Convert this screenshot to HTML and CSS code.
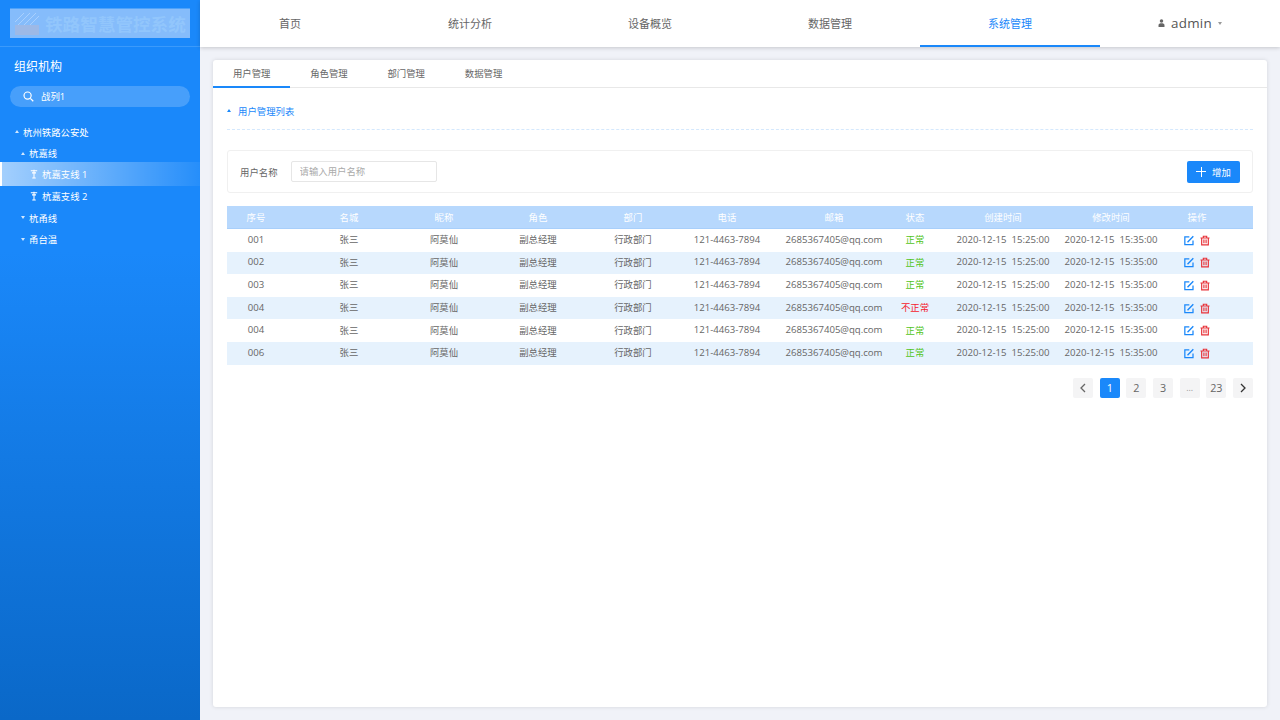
FILE: index.html
```html
<!doctype html>
<html lang="zh-CN">

<head>
  <meta charset="UTF-8" />
  <title>铁路智慧管控系统</title>
  <link rel="stylesheet" href="styles.css">
</head>

<body>
  <svg class="icon-defs" width="0" height="0">
    <symbol id="icon-edit" viewBox="0 0 12 12">
      <path d="M10.8 6V11H1V1.6H6.4" fill="none" stroke="currentColor" stroke-width="1.5" />
      <path d="M4.2 8L11.2 1" fill="none" stroke="currentColor" stroke-width="1.7" />
    </symbol>
    <symbol id="icon-trash" viewBox="0 0 12 12">
      <path d="M.6 3H11.4M4 2.8V.9H8V2.8M2 3.2V11.2H10V3.2M4.7 4.8V9.2M7.3 4.8V9.2" fill="none" stroke="currentColor" stroke-width="1.4" />
    </symbol>
    <symbol id="icon-pole" viewBox="0 0 10 12">
      <path d="M1 2H9M2.5 4.6H7.5M5 .6V10.4M2.8 11H7.2" fill="none" stroke="currentColor" stroke-width="1.3" />
    </symbol>
  </svg>

  <div class="app">
    <aside class="sidebar">
      <div class="brand">
        <div class="logo">
          <svg class="logo-mark" viewBox="0 0 24 22">
            <path d="M0 9L9 0M2 13L15 0M7 14L21 0M13 14L24 3" stroke="#a9d0fd" stroke-width="1" fill="none" />
            <rect x="0" y="12" width="24" height="10" fill="#9db9e6" />
          </svg>
          <span class="logo-text">铁路智慧管控系统</span>
        </div>
      </div>
      <div class="side-title">组织机构</div>
      <div class="side-search">
        <svg class="search-icon" viewBox="0 0 12 12">
          <circle cx="5" cy="5" r="3.9" fill="none" stroke="#fff" stroke-width="1.3" />
          <path d="M8 8L11.2 11.2" stroke="#fff" stroke-width="1.4" />
        </svg>
        <span>战列1</span>
      </div>
      <ul class="tree">
        <li class="tree-item level-1"><i class="caret up"></i>杭州铁路公安处</li>
        <li class="tree-item level-2"><i class="caret up"></i>杭嘉线</li>
        <li class="tree-item level-3 active"><svg class="pole"><use href="#icon-pole" /></svg>杭嘉支线 1</li>
        <li class="tree-item level-3"><svg class="pole"><use href="#icon-pole" /></svg>杭嘉支线 2</li>
        <li class="tree-item level-2"><i class="caret down"></i>杭甬线</li>
        <li class="tree-item level-2"><i class="caret down"></i>甬台温</li>
      </ul>
    </aside>

    <div class="main">
      <header class="topbar">
        <a class="nav-item">首页</a>
        <a class="nav-item">统计分析</a>
        <a class="nav-item">设备概览</a>
        <a class="nav-item">数据管理</a>
        <a class="nav-item active">系统管理</a>
        <div class="nav-item user">
          <svg class="user-icon" viewBox="0 0 8 9">
            <circle cx="4" cy="2.3" r="2" fill="#666" />
            <path d="M.6 9V6.8C.6 5.4 2 4.8 4 4.8S7.4 5.4 7.4 6.8V9Z" fill="#666" />
          </svg>
          <span>admin</span>
          <i class="caret down grey"></i>
        </div>
      </header>

      <div class="content">
        <div class="card">
          <div class="tabs">
            <div class="tab active">用户管理</div>
            <div class="tab">角色管理</div>
            <div class="tab">部门管理</div>
            <div class="tab">数据管理</div>
          </div>

          <div class="panel">
            <div class="section-title"><i class="caret up blue"></i>用户管理列表</div>

            <div class="filter">
              <label class="filter-label">用户名称</label>
              <input class="filter-input" type="text" placeholder="请输入用户名称">
              <button class="add-btn"><span class="plus"></span>增加</button>
            </div>

            <div class="table">
              <div class="row head">
                <div>序号</div><div>名城</div><div>昵称</div><div>角色</div><div>部门</div><div>电话</div><div>邮箱</div><div>状态</div><div>创建时间</div><div>修改时间</div><div>操作</div>
              </div>
              <div class="row">
                <div class="num">001</div><div>张三</div><div>阿莫仙</div><div>副总经理</div><div>行政部门</div><div class="num">121-4463-7894</div><div class="num">2685367405@qq.com</div><div class="ok">正常</div><div class="num">2020-12-15&nbsp; 15:25:00</div><div class="num">2020-12-15&nbsp; 15:35:00</div>
                <div class="ops"><svg class="op-edit"><use href="#icon-edit" /></svg><svg class="op-del"><use href="#icon-trash" /></svg></div>
              </div>
              <div class="row">
                <div class="num">002</div><div>张三</div><div>阿莫仙</div><div>副总经理</div><div>行政部门</div><div class="num">121-4463-7894</div><div class="num">2685367405@qq.com</div><div class="ok">正常</div><div class="num">2020-12-15&nbsp; 15:25:00</div><div class="num">2020-12-15&nbsp; 15:35:00</div>
                <div class="ops"><svg class="op-edit"><use href="#icon-edit" /></svg><svg class="op-del"><use href="#icon-trash" /></svg></div>
              </div>
              <div class="row">
                <div class="num">003</div><div>张三</div><div>阿莫仙</div><div>副总经理</div><div>行政部门</div><div class="num">121-4463-7894</div><div class="num">2685367405@qq.com</div><div class="ok">正常</div><div class="num">2020-12-15&nbsp; 15:25:00</div><div class="num">2020-12-15&nbsp; 15:35:00</div>
                <div class="ops"><svg class="op-edit"><use href="#icon-edit" /></svg><svg class="op-del"><use href="#icon-trash" /></svg></div>
              </div>
              <div class="row">
                <div class="num">004</div><div>张三</div><div>阿莫仙</div><div>副总经理</div><div>行政部门</div><div class="num">121-4463-7894</div><div class="num">2685367405@qq.com</div><div class="bad">不正常</div><div class="num">2020-12-15&nbsp; 15:25:00</div><div class="num">2020-12-15&nbsp; 15:35:00</div>
                <div class="ops"><svg class="op-edit"><use href="#icon-edit" /></svg><svg class="op-del"><use href="#icon-trash" /></svg></div>
              </div>
              <div class="row">
                <div class="num">004</div><div>张三</div><div>阿莫仙</div><div>副总经理</div><div>行政部门</div><div class="num">121-4463-7894</div><div class="num">2685367405@qq.com</div><div class="ok">正常</div><div class="num">2020-12-15&nbsp; 15:25:00</div><div class="num">2020-12-15&nbsp; 15:35:00</div>
                <div class="ops"><svg class="op-edit"><use href="#icon-edit" /></svg><svg class="op-del"><use href="#icon-trash" /></svg></div>
              </div>
              <div class="row">
                <div class="num">006</div><div>张三</div><div>阿莫仙</div><div>副总经理</div><div>行政部门</div><div class="num">121-4463-7894</div><div class="num">2685367405@qq.com</div><div class="ok">正常</div><div class="num">2020-12-15&nbsp; 15:25:00</div><div class="num">2020-12-15&nbsp; 15:35:00</div>
                <div class="ops"><svg class="op-edit"><use href="#icon-edit" /></svg><svg class="op-del"><use href="#icon-trash" /></svg></div>
              </div>
            </div>

            <div class="pager">
              <span class="page"><svg class="chev" viewBox="0 0 8 10"><path d="M6 1L2 5L6 9" /></svg></span>
              <span class="page current">1</span>
              <span class="page">2</span>
              <span class="page">3</span>
              <span class="page dots">...</span>
              <span class="page">23</span>
              <span class="page"><svg class="chev dark" viewBox="0 0 8 10"><path d="M2 1L6 5L2 9" /></svg></span>
            </div>
          </div>
        </div>
      </div>
    </div>
  </div>
</body>

</html>
```

FILE: styles.css
```css
* {
  margin: 0;
  padding: 0;
  box-sizing: border-box;
  font-family: "Open Sans", "Noto Sans CJK SC", sans-serif;
}

body {
  background-color: #f0f2f8;
  height: 100vh;
  overflow: hidden;
}

.icon-defs {
  position: absolute;
}

.app {
  display: flex;
  height: 100vh;
}

/* sidebar */
.sidebar {
  width: 200px;
  flex-shrink: 0;
  background: linear-gradient(180deg, #1a88fa 0%, #1a88fa 35%, #0a68c8 100%);
  color: #fff;
}

.brand {
  height: 47px;
  padding: 8px 10px 0;
  border-bottom: 1px solid #3b9afb;
}

.logo {
  height: 30px;
  background-color: #85bcfb;
  border-top: 1px solid #4ea2fa;
  display: flex;
  align-items: center;
  padding-left: 5px;
  overflow: hidden;
}

.logo-mark {
  width: 24px;
  height: 22px;
  flex-shrink: 0;
}

.logo-text {
  margin-left: 6px;
  font-size: 17.6px;
  font-weight: 700;
  white-space: nowrap;
  color: #92c6fc;
}

.side-title {
  font-size: 12px;
  line-height: 16px;
  margin: 12px 0 0 14px;
}

.side-search {
  height: 21px;
  margin: 11px 10px 0;
  padding: 0 0 1px 13px;
  border-radius: 11px;
  background-color: rgba(255, 255, 255, 0.2);
  display: flex;
  align-items: center;
  font-size: 9.4px;
}

.search-icon {
  width: 11px;
  height: 11px;
  margin-right: 7px;
}

.tree {
  list-style: none;
  margin-top: 14px;
}

.tree-item {
  height: 21.5px;
  display: flex;
  align-items: center;
  font-size: 9.4px;
  white-space: nowrap;
}

.level-1 {
  padding-left: 15px;
}

.level-2 {
  padding-left: 21px;
}

.level-3 {
  padding-left: 30px;
}

.tree-item.active {
  height: 24px;
  margin: -1.75px 0 -0.75px;
  border-left: 2px solid #fff;
  padding-left: 28px;
  background: linear-gradient(90deg, rgba(255, 255, 255, 0.6), rgba(255, 255, 255, 0.05));
}

.pole {
  width: 8px;
  height: 10px;
  margin-right: 4px;
  color: #fff;
}

.caret {
  width: 0;
  height: 0;
  margin-right: 4px;
  border-left: 2.5px solid transparent;
  border-right: 2.5px solid transparent;
}

.caret.up {
  border-bottom: 3px solid rgba(255, 255, 255, 0.8);
}

.caret.down {
  border-top: 3px solid rgba(255, 255, 255, 0.8);
}

.caret.up.blue {
  border-bottom-color: #1a88fa;
  margin-right: 7px;
}

.caret.down.grey {
  border-top-color: #999;
  margin: 0;
}

/* top nav */
.main {
  flex: 1;
  display: flex;
  flex-direction: column;
  min-width: 0;
}

.topbar {
  height: 47px;
  flex-shrink: 0;
  display: flex;
  background-color: #fff;
  box-shadow: 0 1px 4px rgba(0, 0, 0, 0.18);
  position: relative;
}

.nav-item {
  flex: 1;
  display: flex;
  align-items: center;
  justify-content: center;
  font-size: 11px;
  color: #666;
  border-bottom: 2px solid transparent;
}

.nav-item.active {
  color: #1a88fa;
  border-bottom-color: #1a88fa;
}

.user {
  gap: 6px;
  padding-top: 1px;
  font-size: 13.4px;
  color: #555;
  letter-spacing: 0.3px;
}

.user-icon {
  width: 7px;
  height: 8px;
}

/* content */
.content {
  flex: 1;
  padding: 13px 13px 13px;
}

.card {
  height: 100%;
  background-color: #fff;
  border-radius: 3px;
  box-shadow: 0 0 4px rgba(0, 0, 0, 0.12);
}

.tabs {
  display: flex;
  height: 28px;
  border-bottom: 1px solid #e8e8e8;
}

.tab {
  width: 77.3px;
  height: 28px;
  line-height: 27px;
  text-align: center;
  font-size: 9.4px;
  color: #666;
}

.tab.active {
  border-bottom: 2px solid #1a88fa;
}

.panel {
  padding: 0 14px;
}

.section-title {
  height: 42px;
  margin-bottom: 20px;
  padding-top: 4px;
  display: flex;
  align-items: center;
  font-size: 9.4px;
  color: #1a88fa;
  border-bottom: 1px dashed #d4e8fd;
}

.filter {
  height: 43px;
  display: flex;
  align-items: center;
  padding: 0 12px;
  border: 1px solid #f0f0f0;
  border-radius: 3px;
}

.filter-label {
  font-size: 9.4px;
  color: #666;
  margin-right: 13px;
}

.filter-input {
  width: 146px;
  height: 21px;
  padding: 0 8px;
  font-size: 9.4px;
  border: 1px solid #e6e6e6;
  border-radius: 2px;
  outline: none;
}

.filter-input::placeholder {
  color: #aaa;
}

.add-btn {
  margin-left: auto;
  width: 53px;
  height: 22px;
  border: none;
  border-radius: 2px;
  background-color: #1a88fa;
  color: #fff;
  font-size: 9.4px;
  display: flex;
  align-items: center;
  justify-content: center;
  gap: 6px;
}

.plus {
  width: 10px;
  height: 10px;
  background:
    linear-gradient(#fff, #fff) center / 10px 1px no-repeat,
    linear-gradient(#fff, #fff) center / 1px 10px no-repeat;
}

/* table */
.table {
  margin-top: 13px;
}

.row {
  display: grid;
  grid-template-columns: 66px 112px 78px 110px 80px 108px 106px 56px 120px 96px 94px;
  height: 22.6px;
  padding-bottom: 2px;
  align-items: center;
  text-align: center;
  font-size: 9.4px;
  color: #666;
  white-space: nowrap;
}

.row > div:first-child {
  padding-right: 8px;
}

.row > div:last-child {
  padding-right: 18px;
}

.row:nth-child(odd) {
  background-color: #e6f2fd;
}

.row.head {
  height: 23px;
  padding-bottom: 1px;
  background-color: #b7d8fd;
  border-bottom: 1px solid #a8cffb;
  color: #fff;
}

.num {
  font-size: 9.6px;
}

.ok {
  color: #52c41a;
}

.bad {
  color: #f5222d;
}

.ops {
  display: flex;
  justify-content: center;
  gap: 6px;
  padding-top: 2px;
}

.ops svg {
  width: 10px;
  height: 11px;
}

.op-edit {
  color: #1a88fa;
}

.op-del {
  color: #e8333a;
}

/* pagination */
.pager {
  display: flex;
  justify-content: flex-end;
  gap: 6.67px;
  margin-top: 13px;
}

.page {
  width: 20px;
  height: 20px;
  display: flex;
  align-items: center;
  justify-content: center;
  border-radius: 2px;
  background-color: #f4f4f5;
  font-size: 10.8px;
  color: #666;
}

.page.current {
  background-color: #1a88fa;
  color: #fff;
}

.page.dots {
  color: #999;
  font-size: 9px;
}

.chev {
  width: 8px;
  height: 10px;
  fill: none;
  stroke: #666;
  stroke-width: 1.3;
}

.chev.dark {
  stroke: #333;
}
```
